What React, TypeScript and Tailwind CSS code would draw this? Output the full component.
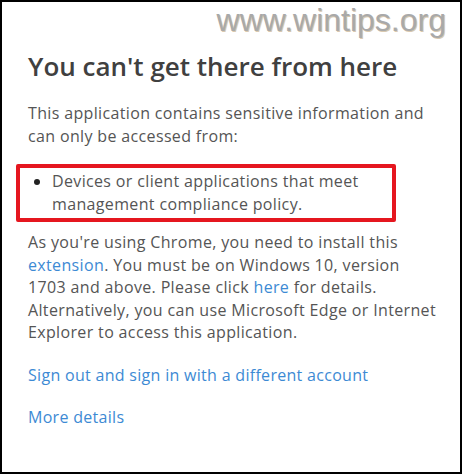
import React from 'react';

const App: React.FC = () => {
  return (
    <div className="w-[462px] h-[474px] border-2 border-black bg-white relative overflow-hidden font-['Open_Sans',sans-serif]">
      {/* watermark */}
      <div className="absolute top-[-2px] right-[14px] text-[32px] leading-[40px] text-[#a9a9a9] font-['Liberation_Sans',Arial,sans-serif] [text-shadow:1px_1px_0_#d9c9b0]">
        www.wintips.org
      </div>

      <div className="pl-[26px] pr-2 pt-[48px]">
        <h1 className="text-[26px] leading-[32px] font-semibold text-[#404040] whitespace-nowrap">
          You can't get there from here
        </h1>

        <p className="mt-[20px] text-[16px] tracking-[0.35px] leading-[23px] text-[#555555] whitespace-nowrap">
          This application contains sensitive information and
          <br />
          can only be accessed from:
        </p>

        <div className="ml-[-12px] mt-[16px] w-[380px] border-4 border-[#e5161f] rounded-[2px] py-[2px] pl-[14px]">
          <ul className="list-disc pl-[18px] text-[16px] tracking-[0.35px] leading-[23px] text-[#555555] marker:text-[#222] whitespace-nowrap">
            <li>
              Devices or client applications that meet
              <br />
              management compliance policy.
            </li>
          </ul>
        </div>

        <p className="mt-[9px] text-[16px] tracking-[0.35px] leading-[22.5px] text-[#555555] whitespace-nowrap">
          As you're using Chrome, you need to install this
          <br />
          <span className="text-[#3d8ad4]">extension</span>. You must be on Windows 10, version
          <br />
          1703 and above. Please click <span className="text-[#3d8ad4]">here</span> for details.
          <br />
          Alternatively, you can use Microsoft Edge or Internet
          <br />
          Explorer to access this application.
        </p>

        <div className="mt-[20px] flex flex-col gap-[19px] text-[16px] tracking-[0.3px] leading-[23px] text-[#3d8ad4] whitespace-nowrap">
          <span>Sign out and sign in with a different account</span>
          <span>More details</span>
        </div>
      </div>
    </div>
  );
};

export default App;
